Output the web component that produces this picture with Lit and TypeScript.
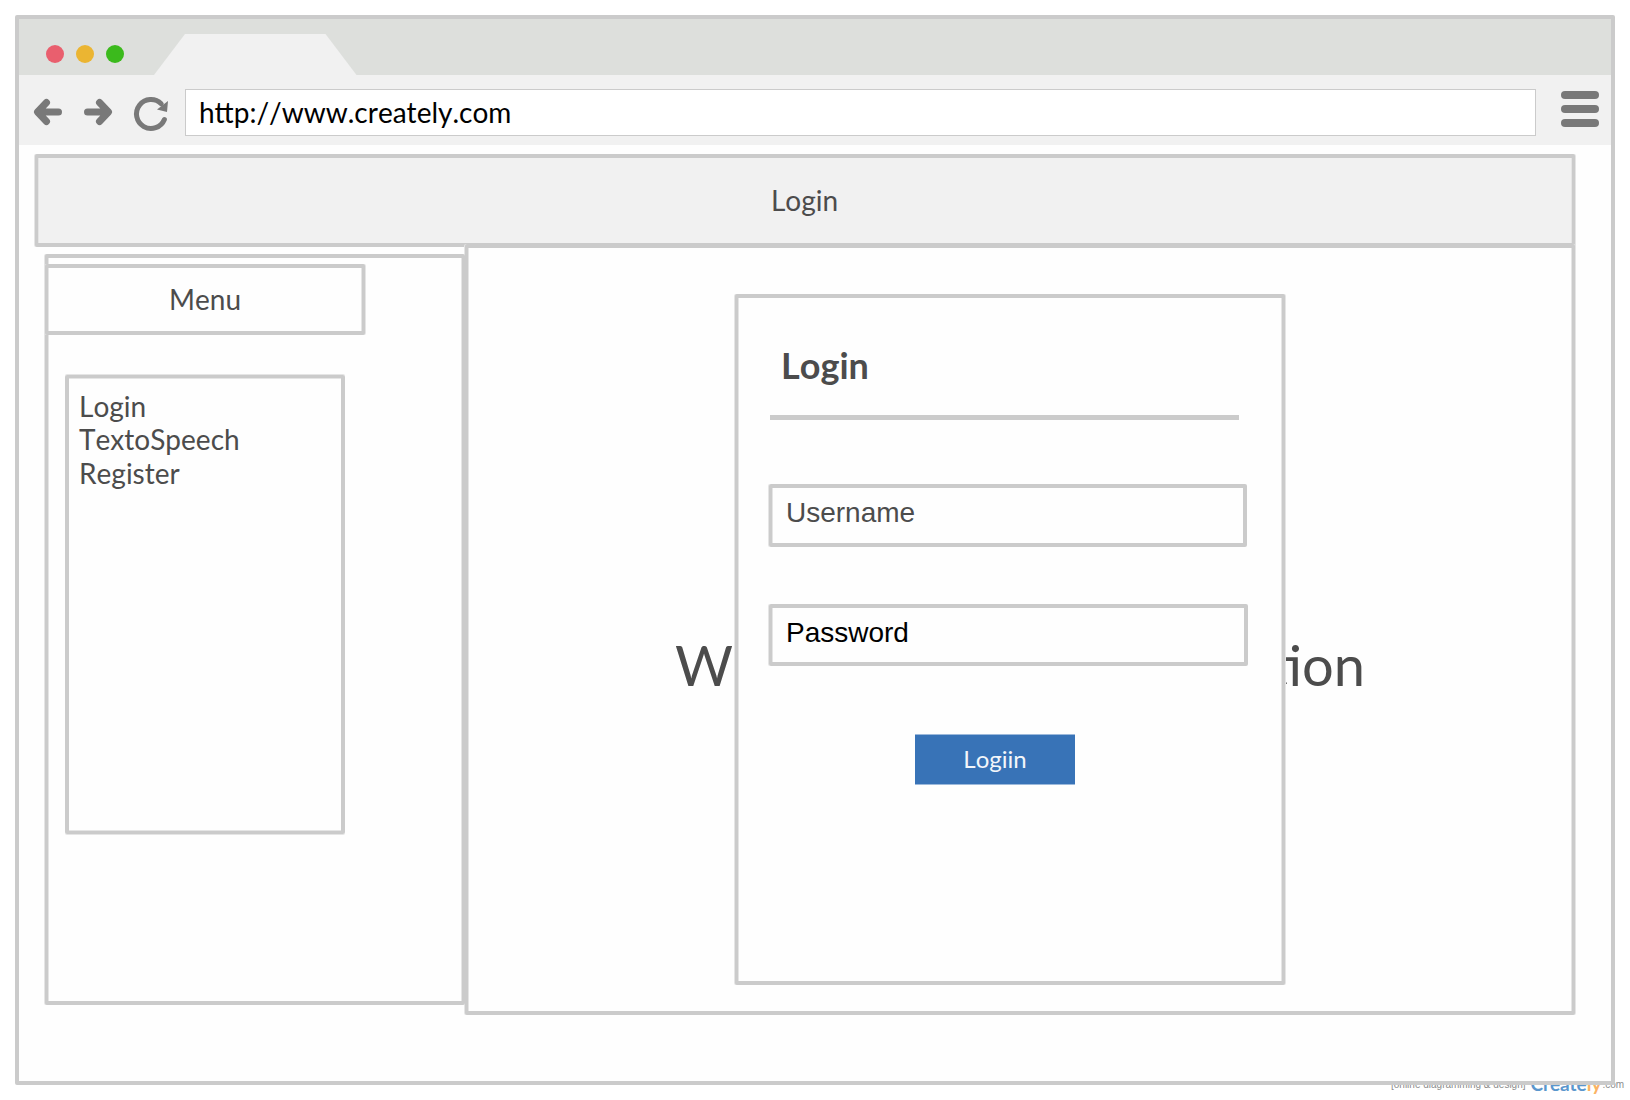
import { LitElement, html, css } from "lit";
import { customElement } from "lit/decorators.js";

@customElement("app-root")
export class AppRoot extends LitElement {
  static styles = css`
    :host { display: block; width: 1630px; height: 1100px; position: relative; overflow: hidden; background: #fff; font-family: Lato, sans-serif; font-kerning: none; color: #4c4c4c; }
    * { box-sizing: border-box; }
    .window { position: relative; margin: 0 15px; top: 15px; width: 1600px; height: 1070px; border: 4px solid #cbcbcb; border-radius: 2px; background: #fefefe; display: flex; flex-direction: column; }
    .tabs { height: 56px; background: #dddfdc; display: flex; align-items: flex-end; }
    .dots { display: flex; gap: 12px; padding: 0 30px 12px 27px; }
    .dot { width: 18px; height: 18px; border-radius: 50%; }
    .red { background: #e95f6e; } .yellow { background: #ebb532; } .green { background: #3bba1c; }
    .tab { display: block; width: 203px; height: 41px; }
    .toolbar { height: 70px; background: #f1f1f1; display: flex; align-items: flex-start; }
    .nav { display: block; width: 166px; height: 70px; flex: none; }
    .url { width: 1351px; height: 47px; margin-top: 14px; border: 1px solid #cbcbcb; background: #fff; color: #000; font-size: 28px; line-height: 44px; padding-left: 13px; }
    .burger { display: flex; flex-direction: column; gap: 6px; margin: 16px 0 0 25px; }
    .bar { width: 38px; height: 8px; border-radius: 4px; background: #797979; }
    .soft { border: solid #cbcbcb; border-width: 4px 3px; border-radius: 2px; box-shadow: -1px 0 #e5e5e5, 1px 0 #e5e5e5, inset 1px 0 #e5e5e5, inset -1px 0 #e5e5e5; background: #fefefe; }
    .banner { margin: 9px 0 0 16px; width: 1540px; height: 93px; flex: none; background: #f1f1f1; text-align: center; font-size: 28px; line-height: 85px; padding-right: 1px; }
    .body { display: flex; align-items: flex-start; margin: -3px 0 0 26px; }
    .side { position: relative; z-index: 1; width: 420px; height: 751px; margin-top: 10px; padding-top: 6px; box-shadow: -1px 0 #e5e5e5, inset 1px 0 #e5e5e5, inset -1px 0 #e5e5e5; }
    .menu { width: 320px; height: 71px; margin-left: -3px; text-align: center; font-size: 28px; line-height: 63px; }
    .list { width: 280px; height: 459px; margin: 40px 0 0 17px; border: solid #cbcbcb; border-width: 3px 4px; border-radius: 2px; box-shadow: 0 -1px #e5e5e5, 0 1px #e5e5e5, inset 0 1px #e5e5e5, inset 0 -1px #e5e5e5; padding: 12px 0 0 10px; font-size: 28px; line-height: 33.4px; }
    .main { position: relative; width: 1110px; height: 771px; }
    .hero { position: absolute; left: 0; right: 0; top: 383px; text-align: center; font-size: 56px; line-height: 67px; white-space: nowrap; }
    .modal { position: absolute; left: 267px; top: 46px; width: 550px; height: 691px; padding-left: 31px; }
    .title { font-size: 36px; font-weight: 700; line-height: 42px; margin: 46px 0 0 12px; }
    .rule { width: 469px; height: 5px; background: #cbcbcb; margin: 29px 0 0 1px; }
    .field { border: solid #cbcbcb; border-width: 4px 4px 4px 3px; border-radius: 2px; box-shadow: -1px 0 #e5e5e5, inset 1px 0 #e5e5e5; font: 28px/32px "Liberation Sans", Arial, sans-serif; font-kerning: none; padding: 9px 0 0 14px; }
    .user { width: 478px; height: 63px; margin-top: 64px; }
    .pass { width: 479px; height: 62px; margin-top: 57px; color: #000; }
    .btn { width: 160px; height: 51px; margin: 68px 0 0 146px; background: #3873b7; border: solid #9cb9db; border-width: 1px 0; color: #f3f6fa; font-size: 24px; line-height: 48px; text-align: center; }
    .mark { position: absolute; left: 1391px; top: 1075px; display: flex; align-items: flex-start; font: 10px/20px "Liberation Sans", Arial, sans-serif; color: #8c8c8c; white-space: nowrap; }
    .brand { font: 700 19px/18px Lato, sans-serif; color: #5b97cd; margin-left: 5px; }
    .ly { color: #fbb364; }
    .com { margin-left: 1px; }
  `;

  render() {
    return html`
      <div class="mark"><span>[online diagramming &amp; design]</span><span class="brand">Create<span class="ly">ly</span></span><span class="com">.com</span></div>
      <div class="window">
        <div class="tabs">
          <div class="dots"><span class="dot red"></span><span class="dot yellow"></span><span class="dot green"></span></div>
          <svg class="tab" viewBox="0 0 203 41"><path d="M0 41 31 0H171.500L202.500 41Z" fill="#f1f1f1" /></svg>
        </div>
        <div class="toolbar">
          <svg class="nav" viewBox="19 75 166 70" fill="none" stroke="#797979">
            <g stroke-width="7" stroke-linecap="round" stroke-linejoin="round">
              <path d="M46.500 102.500 37.500 112 46.500 121.500M38 112H58.500" />
              <path d="M99.500 102.500 108.500 112 99.500 121.500M108 112H87.500" />
            </g>
            <path d="M161.200 103.700A14.500 14.500 0 1 0 164.400 119.500" stroke-width="5" stroke-linecap="round" />
            <path d="M168 101 167 112 157 109.500Z" fill="#797979" stroke="none" />
          </svg>
          <div class="url">http://www.creately.com</div>
          <div class="burger"><span class="bar"></span><span class="bar"></span><span class="bar"></span></div>
        </div>
        <div class="banner soft">Login</div>
        <div class="body">
          <div class="side soft">
            <div class="menu soft">Menu</div>
            <div class="list"><div>Login</div><div>TextoSpeech</div><div>Register</div></div>
          </div>
          <div class="main soft">
            <div class="hero">Welcome to the Application</div>
            <div class="modal soft">
              <div class="title">Login</div>
              <div class="rule"></div>
              <div class="field user">Username</div>
              <div class="field pass">Password</div>
              <div class="btn">Logiin</div>
            </div>
          </div>
        </div>
      </div>
    `;
  }
}
